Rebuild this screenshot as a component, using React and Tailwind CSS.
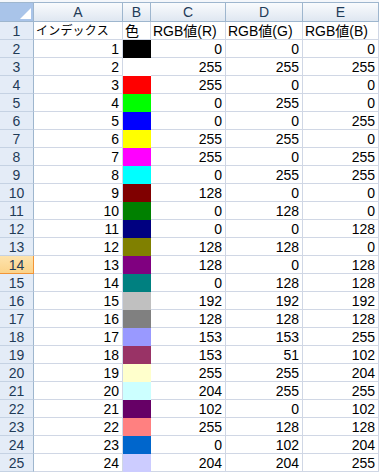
import React from 'react'

const colors = [
  '000000', 'FFFFFF', 'FF0000', '00FF00', '0000FF', 'FFFF00', 'FF00FF', '00FFFF',
  '800000', '008000', '000080', '808000', '800080', '008080', 'C0C0C0', '808080',
  '9999FF', '993366', 'FFFFCC', 'CCFFFF', '660066', 'FF8080', '0066CC', 'CCCCFF',
]

const cols = ['A', 'B', 'C', 'D', 'E']
const widths = ['w-[89px]', 'w-[28px]', 'w-[75px]', 'w-[77px]', 'w-[76px]']

function HeaderRow() {
  return (
    <div className="flex h-[19px] border-b border-[#9eb6ce]">
      <div className="relative w-[34px] shrink-0 border-r border-[#9eb6ce] bg-[#a9c4e9]">
        <div className="absolute bottom-[2px] right-[2px] h-0 w-0 border-b-[11px] border-l-[11px] border-b-white border-l-transparent" />
      </div>
      {cols.map((c, i) => (
        <div
          key={c}
          className={`${widths[i]} shrink-0 border-r border-[#9eb6ce] bg-gradient-to-b from-[#f9fbfd] to-[#dfe7f1] text-center text-[14px] leading-[18px] text-[#1f3b57]`}
        >
          {c}
        </div>
      ))}
    </div>
  )
}

function RowHead({ n }) {
  const sel = n === 14
  return (
    <div
      className={
        sel
          ? 'w-[34px] shrink-0 border-r border-b border-r-[#f29436] border-b-[#f29436] bg-gradient-to-b from-[#fde3ad] to-[#fbd38a] text-center text-[14px] leading-[18px] text-[#1f3b57]'
          : 'w-[34px] shrink-0 border-r border-b border-r-[#9eb6ce] border-b-[#c5d2e3] bg-[#e4ecf7] text-center text-[14px] leading-[18px] text-[#1f3b57]'
      }
    >
      {n}
    </div>
  )
}

function DataRow({ idx }) {
  const hex = colors[idx - 1]
  const r = parseInt(hex.slice(0, 2), 16)
  const g = parseInt(hex.slice(2, 4), 16)
  const b = parseInt(hex.slice(4, 6), 16)
  const cell = 'shrink-0 border-r border-b border-[#d0d7e5] px-[3px] text-right'
  return (
    <div className="flex h-[18px] leading-[18px]">
      <RowHead n={idx + 1} />
      <div className={`${widths[0]} ${cell}`}>{idx}</div>
      <div className={`${widths[1]} shrink-0`} style={{ backgroundColor: '#' + hex }} />
      <div className={`${widths[2]} ${cell}`}>{r}</div>
      <div className={`${widths[3]} ${cell}`}>{g}</div>
      <div className={`${widths[4]} ${cell}`}>{b}</div>
    </div>
  )
}

export default function App() {
  return (
    <div className="h-[473px] w-[379px] overflow-hidden bg-white text-[14px] text-black font-['Liberation_Sans','Noto_Sans_CJK_JP',sans-serif]">
      <div className="h-[3px] border-b border-[#9eb6ce] bg-[#f4f7fb]" />
      <HeaderRow />
      <div className="flex h-[18px] leading-[18px]">
        <RowHead n={1} />
        <div className={`${widths[0]} shrink-0 border-r border-b border-[#d0d7e5] px-[2px] text-[12px] tracking-[0.2px] whitespace-nowrap`}>インデックス</div>
        <div className={`${widths[1]} shrink-0 border-r border-b border-[#d0d7e5] px-[2px]`}>色</div>
        <div className={`${widths[2]} shrink-0 border-r border-b border-[#d0d7e5] px-[2px] whitespace-nowrap`}>RGB値(R)</div>
        <div className={`${widths[3]} shrink-0 border-r border-b border-[#d0d7e5] px-[2px] whitespace-nowrap`}>RGB値(G)</div>
        <div className={`${widths[4]} shrink-0 border-r border-b border-[#d0d7e5] px-[2px] whitespace-nowrap`}>RGB値(B)</div>
      </div>
      {colors.map((_, i) => (
        <DataRow key={i} idx={i + 1} />
      ))}
    </div>
  )
}
